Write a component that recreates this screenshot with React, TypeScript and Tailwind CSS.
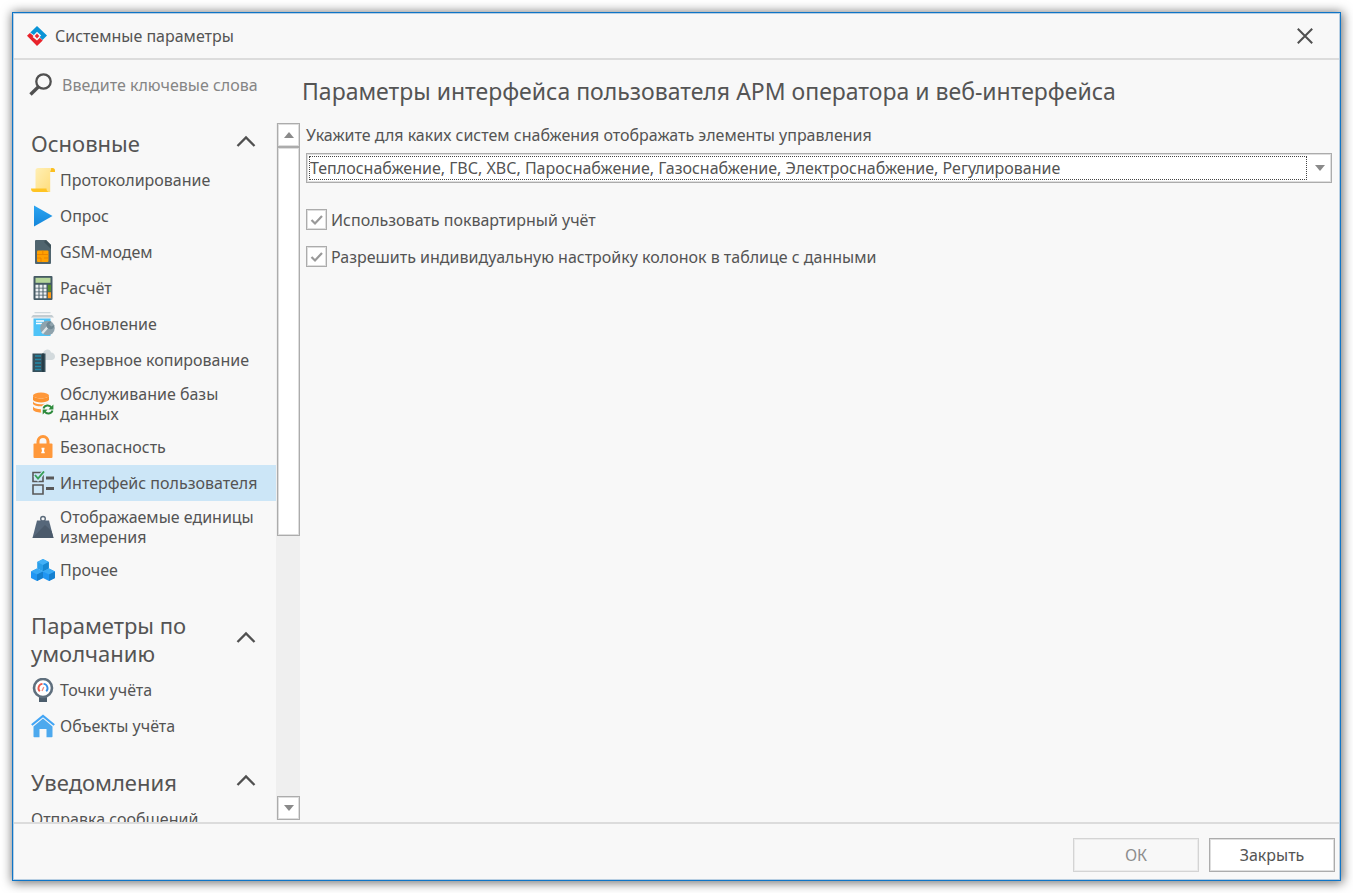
import type { ReactNode } from 'react';

const Svg = ({ children }: { children: ReactNode }) => (
  <svg viewBox="0 0 24 24" className="size-6 shrink-0" aria-hidden="true">
    {children}
  </svg>
);

const LogoIcon = () => (
  <svg viewBox="0 0 20 20" className="size-5 shrink-0" aria-hidden="true">
    <path d="M3.300 6.600 10 0l10 9.600-4.500 4.400-2.900-2.900 1.600-1.500L10 5.800 6.800 9Z" fill="#0a94d6" />
    <path d="M0 9.800l2.900-2.700 3.600 3-.9.800L10 14.600l2.800-2.900 2.900 2.800L10 20Z" fill="#e8232b" />
    <path d="M10 7.600 12.300 10 10 12.400 7.700 10Z" fill="#ee2b34" />
  </svg>
);

const SearchIcon = () => (
  <svg viewBox="0 0 24 24" className="size-6 shrink-0" fill="none" aria-hidden="true">
    <circle cx="14.500" cy="8.500" r="7.200" stroke="#505050" strokeWidth="2.300" />
    <path d="M9.200 14 1.500 21.500" stroke="#505050" strokeWidth="3.400" />
  </svg>
);

const ScrollIcon = () => (
  <Svg>
    <defs>
      <linearGradient id="paper" x1="0" y1="0" x2="1" y2="1">
        <stop offset="0" stopColor="#ffefb5" />
        <stop offset="1" stopColor="#ffdc78" />
      </linearGradient>
    </defs>
    <path d="M20 0h1.500A2.500 2.500 0 0 1 24 2.500V4h-5Z" fill="#fbbf1f" />
    <path d="M7 0h14c-1.500 0-1.800 1-1.800 3v21H4.500V2.500C4.500 1 5.500 0 7 0Z" fill="url(#paper)" />
    <path d="M0 20.500h15.500c0 2 1 3.500 3 3.500H3c-2 0-3-1.500-3-3.500Z" fill="#ffc423" />
  </Svg>
);

const PlayIcon = () => (
  <Svg>
    <defs>
      <linearGradient id="play" x1="0" y1="0" x2="0" y2="1">
        <stop offset="0" stopColor="#2ba5f2" />
        <stop offset="1" stopColor="#1486da" />
      </linearGradient>
    </defs>
    <path d="M3 1.500 21.500 12 3 22.500Z" fill="url(#play)" />
  </Svg>
);

const SimIcon = () => (
  <Svg>
    <path d="M5 0h10l5 5v18a1 1 0 0 1-1 1H5a1 1 0 0 1-1-1V1a1 1 0 0 1 1-1Z" fill="#50656f" />
    <path d="M15 0l5 5v4l-7-7Z" fill="#3e525b" />
    <rect x="6" y="10.500" width="11.500" height="11.500" rx="1" fill="#ffa000" />
    <path d="M6 14.500h11.500M6 18h4m3 0h4.500M11.800 10.500v4M10 18v4" stroke="#e67f00" strokeWidth="0.800" fill="none" />
  </Svg>
);

const CalculatorIcon = () => (
  <Svg>
    <rect x="2.500" y="0" width="19" height="24" rx="1" fill="#455a64" />
    <rect x="4.500" y="1.800" width="15" height="5" fill="#b5d69a" />
    <path
      d="M4.500 8.800h3v3h-3zM8.500 8.800h3v3h-3zM12.500 8.800h3v3h-3zM4.500 12.500h3v3h-3zM8.500 12.500h3v3h-3zM12.500 12.500h3v3h-3zM4.500 16.200h3v2.600h-3zM8.500 16.200h3v2.600h-3zM12.500 16.200h3v2.600h-3zM4.500 19.600h3v2.600h-3zM8.500 19.600h3v2.600h-3zM12.500 19.600h3v2.600h-3z"
      fill="#eef1f3"
    />
    <path d="M16.800 8.800h3.200v6.700h-3.200z" fill="#558b2f" />
    <path d="M16.800 16.200h3.200v6h-3.200z" fill="#ff9a17" />
  </Svg>
);

const UpdateIcon = () => (
  <Svg>
    <path d="M3.500 0h16v1.300h-16z" fill="#cfd8dc" />
    <path d="M2 3h19l2 2.500H0Z" fill="#c3ccd1" />
    <path d="M2.500 6.500h17V24h-17Z" fill="#4fc3f7" />
    <path d="M5 9h8M5 11.500h6" stroke="#fff" strokeWidth="1.500" />
    <circle cx="16.500" cy="16" r="7.300" fill="#8fa3ad" />
    <path d="M11.200 21.200 18 13.500" stroke="#dfe5e8" strokeWidth="2.400" />
    <path d="M20.500 9.500a4 4 0 1 0 2.800 3.600l-3 1.400-2-2Z" fill="#708792" />
  </Svg>
);

const BackupIcon = () => (
  <Svg>
    <path d="M12 12V6c0-2 1-4 4-4.500 2-.3 3.500 1 4 3 2.500 0 4 2 4 4s-1.500 3.500-3.500 3.500Z" fill="#d3dadd" />
    <path d="M1.500 5.500h13V24h-13Z" fill="#37505c" />
    <path d="M4 8h6M4 11.500h6M4 15h6M4 18.500h6M4 21.500h6" stroke="#2389a8" strokeWidth="1.400" />
    <path d="M11 5.500h2V24h-2z" fill="#263e49" />
  </Svg>
);

const DatabaseIcon = () => (
  <Svg>
    <ellipse cx="10" cy="3.500" rx="8" ry="3" fill="#ff983a" />
    <path d="M2 3.500c1 4 15 4 16 0v4.500c-2 3.300-14 3.300-16 0Z" fill="#fb922f" />
    <path d="M2 9.500c2 3.400 10 3.500 15.500.9-3.500.8-5.500 2-6.500 3.900C6.500 14.400 3 13.600 2 12Z" fill="#ff983a" />
    <path d="M2 14.500c1 2 4 2.700 8 2.700-.3 1.100-.2 2.300.2 3.300C6 20.500 2.500 19.500 2 17.500Z" fill="#ff983a" />
    <path d="M12.500 16.500c1-3.500 6-4.200 8-.8M21.500 18.500c-1 3.500-6 4.200-8 .8" stroke="#2e8b3d" strokeWidth="1.900" fill="none" />
    <path d="M22.400 12.500v5h-5zM11.700 22.500v-5h5z" fill="#2e8b3d" />
  </Svg>
);

const LockIcon = () => (
  <Svg>
    <path d="M7 10V6.500a5 5 0 0 1 10 0V10" stroke="#ff983a" strokeWidth="3" fill="none" />
    <rect x="2.500" y="8.500" width="19" height="14.500" rx="1" fill="#ff983a" />
    <path d="M10.500 12.800h3v1.800h-.4v2.200h.6v1.400h-3.400v-1.400h.6v-2.200h-.4z" fill="#fff" />
  </Svg>
);

const ChecklistIcon = () => (
  <Svg>
    <path d="M2 1.500h10v9H2zM2 14h10v9H2z" fill="none" stroke="#585858" strokeWidth="1.600" />
    <path d="M4 4.500 7 8l6.500-8" stroke="#cce6f7" strokeWidth="4" fill="none" />
    <path d="M4 4 7 7.500 13 .5" stroke="#38a058" strokeWidth="1.900" fill="none" />
    <path d="M15 7h8M15 17.500h8" stroke="#585858" strokeWidth="2.800" />
  </Svg>
);

const WeightIcon = () => (
  <Svg>
    <circle cx="12" cy="3.800" r="2.300" stroke="#5a6a7a" strokeWidth="1.400" fill="none" />
    <path d="M6 5.500h12L22.500 23h-21Z" fill="#56677a" />
    <path d="M1.500 22.900 14 10l6.500 6 2 6.900Z" fill="#4b5a6b" />
  </Svg>
);

const CubesIcon = () => (
  <Svg>
    <path d="M12 1l5.800 3v6.500L12 13.500l-5.800-3V4Z" fill="#2a9fea" />
    <path d="M12 1l5.800 3L12 7 6.200 4Z" fill="#42b0f7" />
    <path d="M12 7v6.500l5.800-3V4Z" fill="#1787d2" />
    <path d="M6 10.500l6 3v6.500l-6 3-6-3v-6.500Z" fill="#2196f3" />
    <path d="M6 10.500l6 3-6 3-6-3Z" fill="#38a9f5" />
    <path d="M6 16.500V23l6-3v-6.500Z" fill="#1680cf" />
    <path d="M18 10.500l6 3v6.500l-6 3-6-3v-6.500Z" fill="#2196f3" />
    <path d="M18 10.500l6 3-6 3-6-3Z" fill="#38a9f5" />
    <path d="M18 16.500V23l6-3v-6.500Z" fill="#1680cf" />
  </Svg>
);

const MeterIcon = () => (
  <Svg>
    <path d="M8 18h8v6H8Z" fill="#4c5d6c" />
    <circle cx="12" cy="10" r="9" fill="#fff" stroke="#5f6f7d" strokeWidth="2.600" />
    <path d="M8.800 13.300a4.300 4.300 0 0 1 2.700-7.400" stroke="#ef5a4c" strokeWidth="1.900" fill="none" />
    <path d="M12.500 5.900a4.300 4.300 0 0 1 2.700 7.400" stroke="#3b8fe4" strokeWidth="1.900" fill="none" />
    <path d="M11 13l1.800-4" stroke="#f08a80" strokeWidth="1.300" />
  </Svg>
);

const HomeIcon = () => (
  <Svg>
    <path d="M.8 11 12 1.800 23.200 11" stroke="#42a5f5" strokeWidth="2.200" fill="none" />
    <path d="M2.500 12.500 12 4.600l9.500 7.900V22.500a.8.800 0 0 1-.8.800H15.500V15h-7v8.300H3.300a.8.800 0 0 1-.8-.8Z" fill="#4da9ee" />
  </Svg>
);

const Triangle = ({ up = false }: { up?: boolean }) => (
  <svg viewBox="0 0 10 6" className="h-1.5 w-2.5" aria-hidden="true">
    <path d={up ? 'M5 0 10 6H0Z' : 'M0 0h10L5 6Z'} fill="#8a8a8a" />
  </svg>
);

const box = 'border border-[#acacac] bg-white shadow-[inset_0_0_0_1px_#dedede]';

type Item = { label: string; icon?: ReactNode; selected?: boolean; tall?: boolean };
type Section = { title: string; items: Item[] };

const sections: Section[] = [
  {
    title: 'Основные',
    items: [
      { label: 'Протоколирование', icon: <ScrollIcon /> },
      { label: 'Опрос', icon: <PlayIcon /> },
      { label: 'GSM-модем', icon: <SimIcon /> },
      { label: 'Расчёт', icon: <CalculatorIcon /> },
      { label: 'Обновление', icon: <UpdateIcon /> },
      { label: 'Резервное копирование', icon: <BackupIcon /> },
      { label: 'Обслуживание базы данных', icon: <DatabaseIcon />, tall: true },
      { label: 'Безопасность', icon: <LockIcon /> },
      { label: 'Интерфейс пользователя', icon: <ChecklistIcon />, selected: true },
      { label: 'Отображаемые единицы измерения', icon: <WeightIcon />, tall: true },
      { label: 'Прочее', icon: <CubesIcon /> },
    ],
  },
  {
    title: 'Параметры по умолчанию',
    items: [
      { label: 'Точки учёта', icon: <MeterIcon /> },
      { label: 'Объекты учёта', icon: <HomeIcon /> },
    ],
  },
  { title: 'Уведомления', items: [{ label: 'Отправка сообщений' }] },
];

const NavSection = ({ title, items }: Section) => (
  <section>
    <h2>
      <button
        type="button"
        aria-expanded="true"
        className="flex min-h-[39px] w-full items-center justify-between py-[5px] pr-5 pl-[15px] text-left text-[22px] leading-7"
      >
        <span className="max-w-44">{title}</span>
        <svg viewBox="0 0 20 12" className="mb-1 h-3 w-5 shrink-0" fill="none" aria-hidden="true">
          <path d="M1.500 11 10 2.500l8.500 8.500" stroke="#505050" strokeWidth="2.300" />
        </svg>
      </button>
    </h2>
    <ul>
      {items.map(({ label, icon, selected, tall }) => (
        <li key={label}>
          <a
            href="#"
            aria-current={selected ? 'page' : undefined}
            className={`flex items-center gap-[5px] pl-[15px] ${tall ? 'h-[51px]' : 'h-9'} ${selected ? 'bg-[#cce6f7]' : ''}`}
          >
            {icon}
            <span className={tall ? 'max-w-[200px]' : 'whitespace-nowrap'}>{label}</span>
          </a>
        </li>
      ))}
    </ul>
  </section>
);

const Check = ({ id, label }: { id: string; label: string }) => (
  <div className="flex items-center gap-1">
    <span className="relative size-[21px] shrink-0">
      <input id={id} type="checkbox" defaultChecked className={`peer block size-full appearance-none ${box}`} />
      <svg
        viewBox="0 0 21 21"
        className="pointer-events-none absolute inset-0 hidden size-full peer-checked:block"
        fill="none"
        aria-hidden="true"
      >
        <path d="M5.500 11 9 14.500 16 7" stroke="#999" strokeWidth="2.200" />
      </svg>
    </span>
    <label htmlFor={id}>{label}</label>
  </div>
);

export default function App() {
  return (
    <div className="flex h-screen bg-white p-3 font-['Noto_Sans',sans-serif] text-base leading-5 text-[#545454]">
      <div className="flex min-w-0 flex-1 flex-col border border-[#0f75c7] bg-[#f8f8f8] p-px shadow-[inset_0_0_0_1px_#b9cfe2,1px_1px_10px_1px_rgba(0,0,0,0.55)]">
        <header className="flex h-[46px] shrink-0 items-center border-b-2 border-[#dcdcdc] pr-[22px] pl-[13px]">
          <LogoIcon />
          <h1 className="ml-2 flex-1">Системные параметры</h1>
          <button type="button" aria-label="Закрыть окно" className="flex size-6 items-center justify-center">
            <svg viewBox="0 0 16 16" className="size-4" aria-hidden="true">
              <path d="M.8.8l14.400 14.400M15.200.8.800 15.200" stroke="#505050" strokeWidth="2" />
            </svg>
          </button>
        </header>

        <div className="flex min-h-0 flex-1 border-b-2 border-[#dcdcdc]">
          <aside className="flex w-[286px] shrink-0 flex-col">
            <div className="flex h-[63px] shrink-0 items-start gap-[9px] pt-[13px] pl-[15px]">
              <SearchIcon />
              <input
                type="search"
                aria-label="Поиск"
                placeholder="Введите ключевые слова"
                className="h-6 min-w-0 flex-1 bg-transparent outline-none placeholder:text-[#858585]"
              />
            </div>
            <div className="flex min-h-0 flex-1">
              <nav className="flex min-w-0 flex-1 flex-col gap-[18px] overflow-hidden pl-0.5">
                {sections.map((section) => (
                  <NavSection key={section.title} {...section} />
                ))}
              </nav>
              <div className="mb-0.5 flex w-6 shrink-0 flex-col bg-[#efefef] pl-px">
                <button
                  type="button"
                  aria-label="Прокрутить вверх"
                  className={`flex h-6 shrink-0 items-center justify-center ${box}`}
                >
                  <Triangle up />
                </button>
                <div className="flex-1">
                  <div className={`h-3/5 ${box}`} />
                </div>
                <button
                  type="button"
                  aria-label="Прокрутить вниз"
                  className={`flex h-6 shrink-0 items-center justify-center ${box}`}
                >
                  <Triangle />
                </button>
              </div>
            </div>
          </aside>

          <main className="min-w-0 flex-1 pr-[7px] pl-1.5">
            <h2 className="-ml-1 pt-[15px] text-[23px] leading-8">
              Параметры интерфейса пользователя АРМ оператора и веб-интерфейса
            </h2>
            <label htmlFor="systems" className="mt-[18px] block">
              Укажите для каких систем снабжения отображать элементы управления
            </label>
            <div className={`relative mt-2 flex h-[30px] p-0.5 pr-6 ${box}`}>
              <select
                id="systems"
                className="min-w-0 flex-1 appearance-none border border-dotted border-[#444] bg-transparent outline-none"
              >
                <option>Теплоснабжение, ГВС, ХВС, Пароснабжение, Газоснабжение, Электроснабжение, Регулирование</option>
              </select>
              <span className="pointer-events-none absolute inset-y-0 right-1.5 flex items-center">
                <Triangle />
              </span>
            </div>
            <div className="mt-[26px] flex flex-col gap-4">
              <Check id="apartments" label="Использовать поквартирный учёт" />
              <Check id="columns" label="Разрешить индивидуальную настройку колонок в таблице с данными" />
            </div>
          </main>
        </div>

        <footer className="flex h-[55px] shrink-0 items-center justify-end gap-2.5 pt-1.5 pr-1">
          <button
            type="button"
            disabled
            className="h-[34px] w-[126px] border border-[#d4d4d4] text-[#8d8d8d] shadow-[inset_0_0_0_1px_#ebebeb]"
          >
            ОК
          </button>
          <button type="button" className={`h-[34px] w-[126px] ${box}`}>
            Закрыть
          </button>
        </footer>
      </div>
    </div>
  );
}
